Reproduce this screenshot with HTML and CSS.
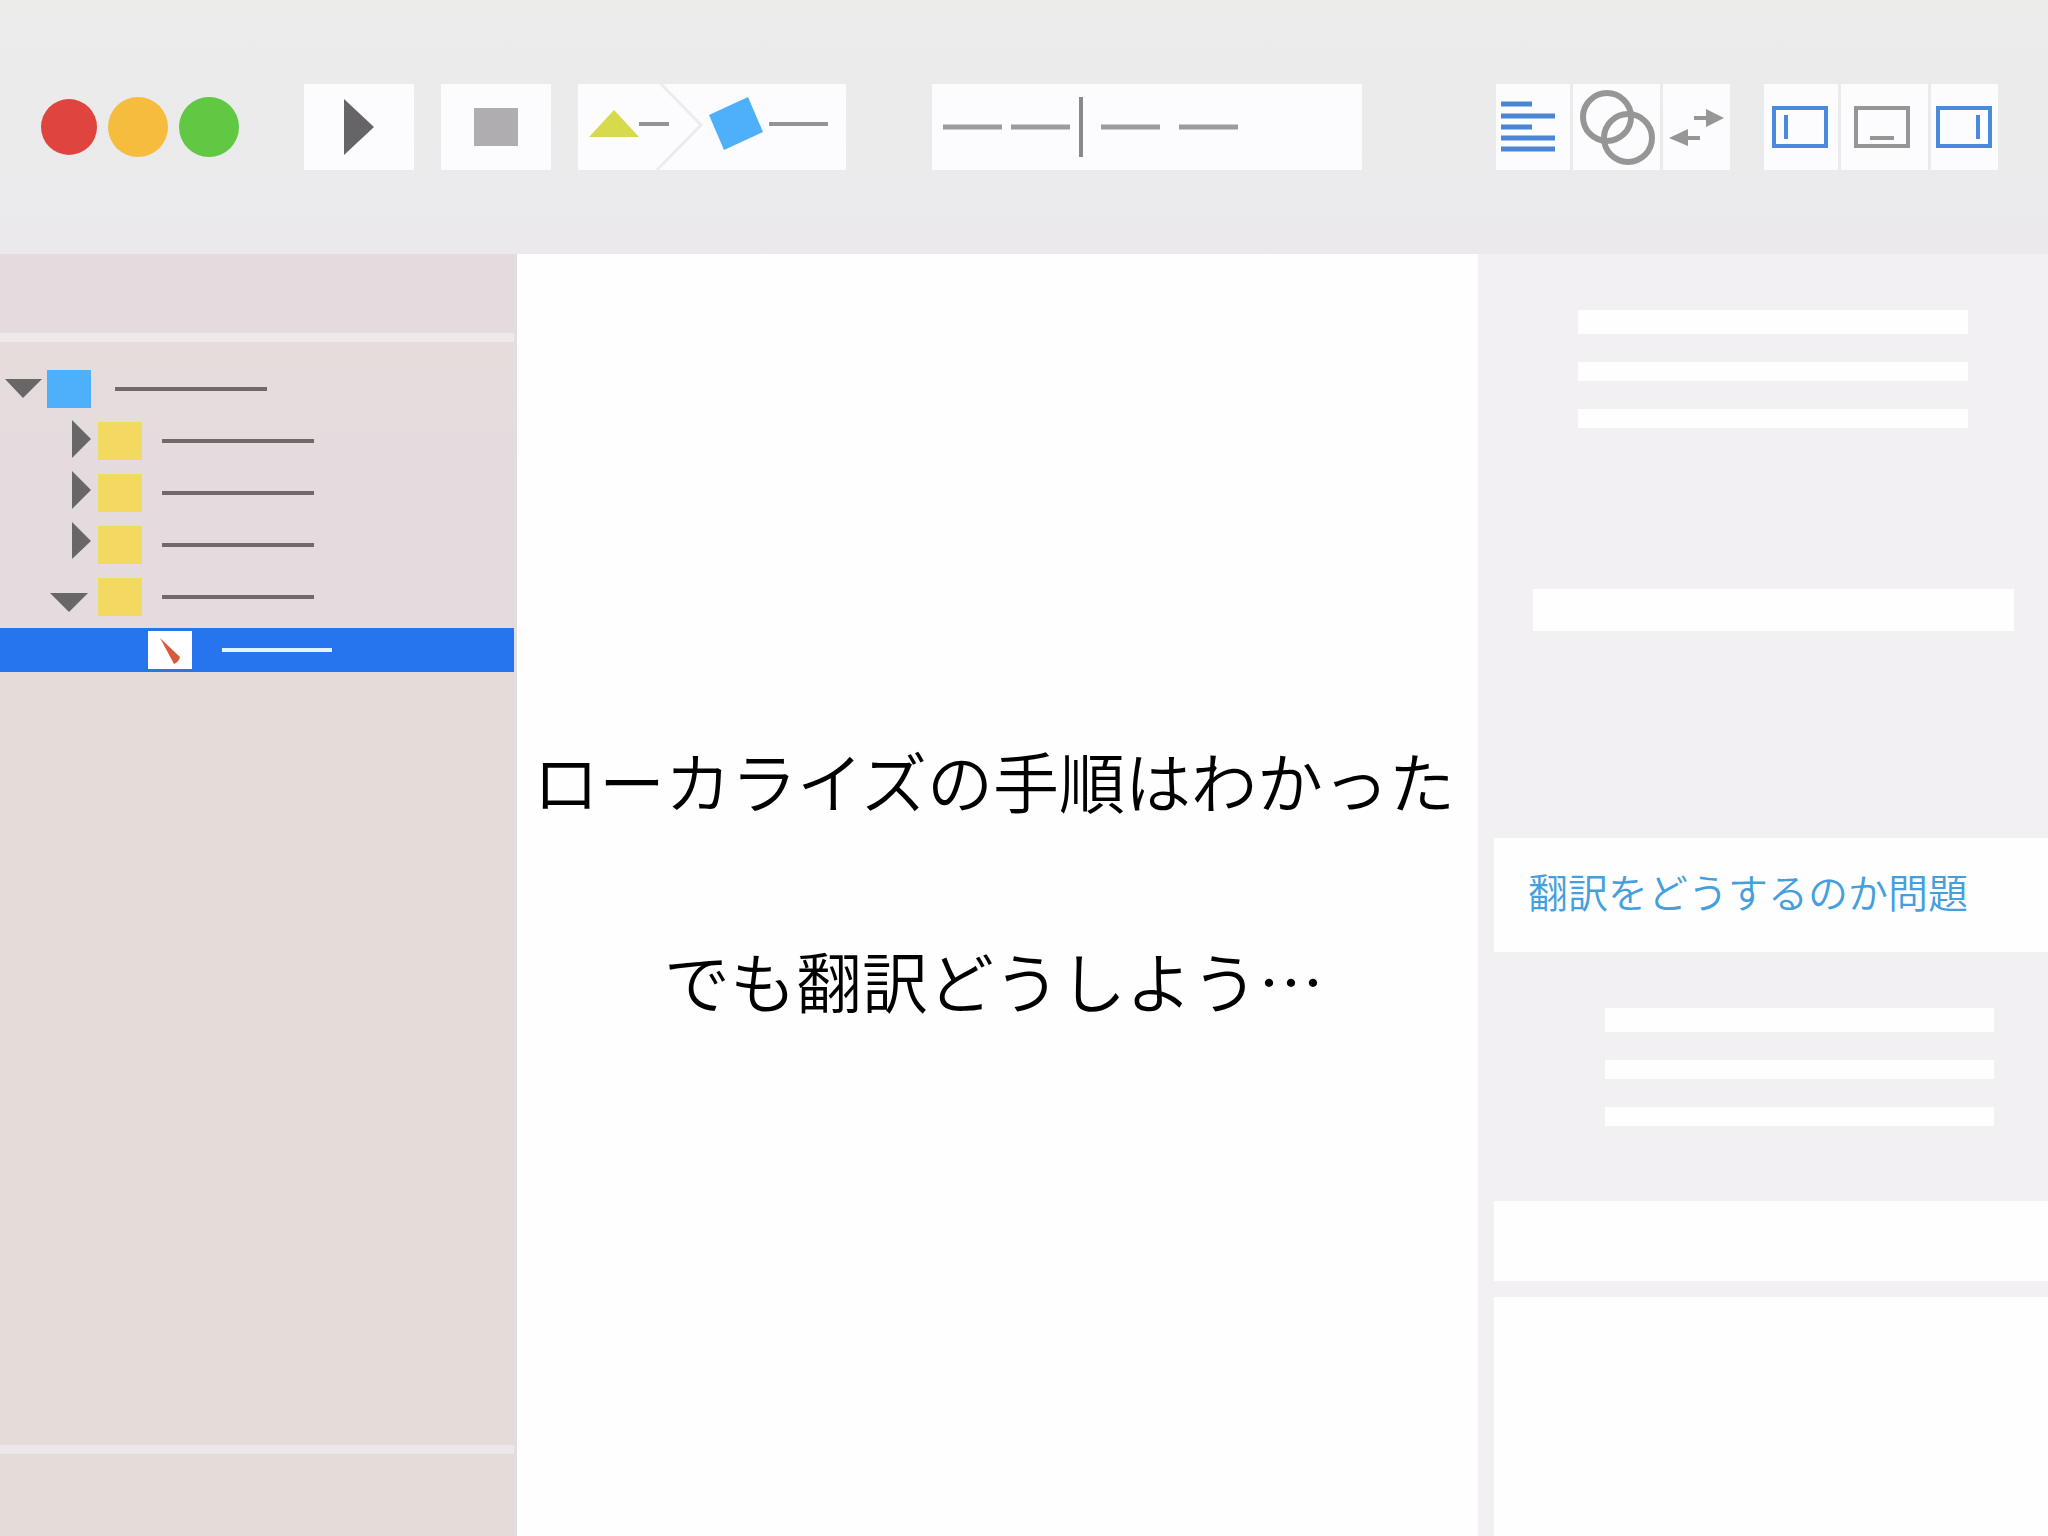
FILE: index.html
```html
<!DOCTYPE html>
<html lang="ja">
<head>
    <meta charset="UTF-8">
    <meta name="viewport" content="width=device-width, initial-scale=1.0">
    <title>翻訳をどうするのか問題</title>
    <link rel="stylesheet" href="styles.css">
</head>
<body>

<header class="toolbar">
    <div class="lights">
        <button class="light red" aria-label="閉じる"></button>
        <button class="light yellow" aria-label="しまう"></button>
        <button class="light green" aria-label="拡大"></button>
    </div>

    <div class="run">
        <button class="tool" aria-label="実行">
            <svg width="30" height="56" viewBox="0 0 30 56"><path d="M0 0L30 28L0 56Z" fill="#666466"/></svg>
        </button>
        <button class="tool" aria-label="停止">
            <svg width="44" height="38" viewBox="0 0 44 38"><path d="M0 0H44V38H0Z" fill="#afadaf"/></svg>
        </button>
        <button class="scheme" aria-label="スキーム">
            <svg width="268" height="86" viewBox="0 0 268 86">
                <path d="M83 0L123 41L79 86" fill="none" stroke="#ececed" stroke-width="3"/>
                <path d="M36 26L61 53H11Z" fill="#d8da4d"/>
                <path d="M61 40H91" stroke="#959395" stroke-width="4"/>
                <path d="M170 13L185 48L146 66L131 31Z" fill="#4eaffb"/>
                <path d="M191 40H250" stroke="#959395" stroke-width="4"/>
            </svg>
        </button>
    </div>

    <div class="activity">
        <svg width="310" height="86" viewBox="0 0 310 86">
            <path d="M11 43H70M79 43H138M169 43H228M247 43H306" stroke="#9d9b9d" stroke-width="5"/>
            <path d="M149 13V73" stroke="#8b898b" stroke-width="4"/>
        </svg>
    </div>

    <div class="group">
        <button aria-label="標準エディタ">
            <svg width="74" height="86" viewBox="0 0 74 86"><path d="M5 20H36M5 32H59M5 43H36M5 54H59M5 65H59" stroke="#4a86d4" stroke-width="5"/></svg>
        </button>
        <button aria-label="アシスタントエディタ">
            <svg width="87" height="86" viewBox="0 0 87 86">
                <g fill="none" stroke="#969696" stroke-width="6">
                    <circle cx="34" cy="33" r="24"/>
                    <circle cx="55" cy="54" r="24"/>
                </g>
            </svg>
        </button>
        <button aria-label="バージョンエディタ">
            <svg width="67" height="86" viewBox="0 0 67 86">
                <path d="M31 32H43V25L61 34L43 43V36H31Z" fill="#969696"/>
                <path d="M37 52H25V45L6 54L25 62V56H37Z" fill="#969696"/>
            </svg>
        </button>
    </div>

    <div class="group">
        <button aria-label="ナビゲータ">
            <svg width="74" height="86" viewBox="0 0 74 86"><path d="M10 24H62V62H10ZM22 31V55" fill="none" stroke="#4a8ade" stroke-width="4"/></svg>
        </button>
        <button aria-label="デバッグエリア">
            <svg width="87" height="86" viewBox="0 0 87 86"><path d="M15 24H67V62H15ZM29 54H53" fill="none" stroke="#969696" stroke-width="4"/></svg>
        </button>
        <button aria-label="ユーティリティ">
            <svg width="67" height="86" viewBox="0 0 67 86"><path d="M7 24H59V62H7ZM47 31V55" fill="none" stroke="#4a8ade" stroke-width="4"/></svg>
        </button>
    </div>
</header>

<main class="workspace">
    <nav class="sidebar">
        <div class="sidebar-head"></div>
        <ul class="tree">
            <li class="row root">
                <button class="toggle" aria-label="プロジェクトを閉じる">
                    <svg width="42" height="38" viewBox="0 0 42 38"><path d="M0 9H37L18 28Z"/></svg>
                </button>
                <span class="file"></span>
                <span class="name"></span>
            </li>
            <li class="row">
                <button class="toggle" aria-label="フォルダ1を開く">
                    <svg width="48" height="38" viewBox="0 0 48 38"><path d="M22 -2L41 17L22 36Z"/></svg>
                </button>
                <span class="file"></span>
                <span class="name"></span>
            </li>
            <li class="row">
                <button class="toggle" aria-label="フォルダ2を開く">
                    <svg width="48" height="38" viewBox="0 0 48 38"><path d="M22 -3L41 16L22 35Z"/></svg>
                </button>
                <span class="file"></span>
                <span class="name"></span>
            </li>
            <li class="row">
                <button class="toggle" aria-label="フォルダ3を開く">
                    <svg width="48" height="38" viewBox="0 0 48 38"><path d="M22 -4L41 15L22 33Z"/></svg>
                </button>
                <span class="file"></span>
                <span class="name"></span>
            </li>
            <li class="row">
                <button class="toggle" aria-label="フォルダ4を閉じる">
                    <svg width="48" height="38" viewBox="0 0 48 38"><path d="M0 15H38L19 34Z"/></svg>
                </button>
                <span class="file"></span>
                <span class="name"></span>
            </li>
            <li class="row selected">
                <span class="file">
                    <svg width="44" height="38" viewBox="0 0 44 38"><path d="M12 7L32 26Q31 31 26 33Z" fill="#d85a3c"/></svg>
                </span>
                <span class="name"></span>
            </li>
        </ul>
        <div class="sidebar-foot"></div>
    </nav>

    <section class="editor">
        <p>ローカライズの手順はわかった</p>
        <p>でも翻訳どうしよう…</p>
    </section>

    <aside class="inspector">
        <div class="lines">
            <span></span>
            <span></span>
            <span></span>
        </div>
        <div class="field"></div>
        <h1 class="title">翻訳をどうするのか問題</h1>
        <div class="lines lower">
            <span></span>
            <span></span>
            <span></span>
        </div>
        <div class="panel"></div>
        <div class="panel last"></div>
    </aside>
</main>

</body>
</html>
```
FILE: styles.css
```css
* {
    box-sizing: border-box;
}
body {
    margin: 0;
    min-height: 100vh;
    display: flex;
    flex-direction: column;
    font-family: "Noto Sans CJK JP", sans-serif;
    background-color: #fefefe;
}
button {
    padding: 0;
    border: none;
    background: none;
    cursor: pointer;
}
svg {
    display: block;
    overflow: visible;
    flex-shrink: 0;
}

/* toolbar */
.toolbar {
    display: flex;
    align-items: center;
    padding: 84px 50px 84px 41px;
    background: linear-gradient(#ececeb, #ebe9ec);
}
.lights {
    display: flex;
    align-items: center;
    gap: 11px;
    margin-right: 65px;
}
.light {
    width: 60px;
    height: 60px;
    border-radius: 50%;
}
.red {
    width: 56px;
    height: 56px;
    background-color: #e0443e;
}
.yellow {
    background-color: #f6bc3e;
}
.green {
    background-color: #60c842;
}
.run {
    display: flex;
    gap: 27px;
    margin-right: 86px;
}
.tool {
    display: flex;
    align-items: center;
    justify-content: center;
    width: 110px;
    height: 86px;
    background-color: #fcfbfd;
}
.scheme {
    background-color: #fcfbfd;
}
.activity {
    flex: 1;
    margin-right: 134px;
    background-color: #fcfbfd;
}
.group {
    display: flex;
    gap: 3px;
}
.group button {
    background-color: #fcfbfd;
}
.group + .group {
    margin-left: 34px;
}

/* workspace */
.workspace {
    flex: 1;
    display: grid;
    grid-template-columns: 517fr 961fr 570fr;
}
.sidebar {
    display: flex;
    flex-direction: column;
    background-color: #e5dcda;
    border-right: 3px solid #e1dedf;
}
.sidebar-head {
    height: 88px;
    background-color: #e4dbde;
    border-bottom: 9px solid #efe9ea;
}
.sidebar-foot {
    height: 91px;
    margin-top: auto;
    border-top: 9px solid #ebe9e7;
}
.tree {
    list-style: none;
    margin: 0;
    padding: 21px 0 0;
    background: linear-gradient(#e5dddb, #e4dbde 120px);
}
.row {
    display: flex;
    align-items: center;
    height: 52px;
    padding-left: 50px;
}
.toggle {
    fill: #686666;
}
.file {
    width: 44px;
    height: 38px;
    margin-right: 20px;
    background-color: #f2da62;
}
.name {
    width: 152px;
    height: 4px;
    background-color: #716869;
}
.root {
    padding-left: 5px;
}
.root .file {
    margin-right: 24px;
    background-color: #4eaffb;
}
.selected {
    height: 44px;
    margin: 5px 0 0;
    padding-left: 148px;
    background-color: #2775ee;
}
.selected .file {
    margin-right: 30px;
    background-color: #fff;
}
.selected .name {
    width: 110px;
    background-color: #e2f4ff;
}

/* editor */
.editor {
    padding: 475px 7px 0 0;
    text-align: center;
    background-color: #fefefe;
}
.editor p {
    margin: 0 0 100px;
    font-size: 66px;
    font-weight: 350;
    line-height: 100px;
    white-space: nowrap;
    color: #000;
}

/* inspector */
.inspector {
    display: flex;
    flex-direction: column;
    padding-left: 16px;
    background-color: #f2f0f3;
}
.lines {
    display: flex;
    flex-direction: column;
    gap: 28px;
    margin: 56px 80px 0 84px;
}
.lines span {
    height: 19px;
    background-color: #fefefe;
}
.lines span:first-child {
    height: 24px;
}
.lower {
    margin: 56px 54px 0 111px;
}
.field {
    height: 42px;
    margin: 161px 34px 0 39px;
    background-color: #fefefe;
}
.title {
    margin: 207px 0 0;
    padding: 23px 34px 31px;
    font-size: 40px;
    font-weight: 350;
    line-height: 60px;
    white-space: nowrap;
    color: #459fdc;
    background-color: #fefefe;
}
.panel {
    height: 80px;
    margin-top: 75px;
    background-color: #fefefe;
}
.last {
    flex: 1;
    height: auto;
    margin-top: 16px;
}
```
